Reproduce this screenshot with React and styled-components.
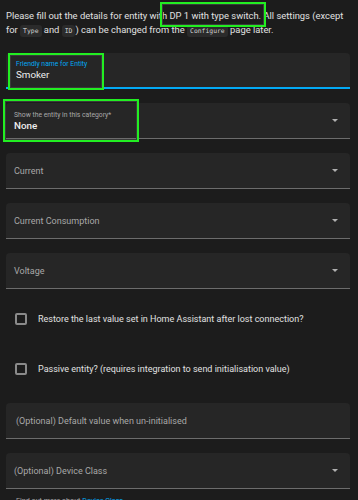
import React from "react";
import styled, { createGlobalStyle } from "styled-components";

const Global = createGlobalStyle`
  html, body {
    margin: 0;
    padding: 0;
    background-color: #1c1c1c;
  }

  body {
    font-family: Roboto, "Liberation Sans", sans-serif;
    color: #e1e1e1;
  }
`;

const Page = styled.div`
  width: 358px;
  height: 500px;
  overflow: hidden;
  box-sizing: border-box;
  padding: 9px 4px 0 6px;
`;

const Intro = styled.p`
  font-size: 9.4px;
  line-height: 14px;
  margin: 0;
  padding: 0;
  color: #e1e1e1;
`;

const Code = styled.code`
  font-family: "DejaVu Sans Mono", "Liberation Mono", monospace;
  font-size: 6.4px;
  background-color: #2b2b2b;
  color: #d0d0d0;
  padding: 2px 3px;
  border-radius: 3px;
`;

const Marked = styled.span`
  position: relative;

  &::before {
    content: "";
    position: absolute;
    left: -9px;
    right: -5px;
    top: -8px;
    bottom: -6px;
    border: 2px solid #22ee22;
    box-shadow: inset 0 0 0 1px #3a3a3a;
    pointer-events: none;
  }
`;

const Form = styled.div`
  display: flex;
  flex-direction: column;
  gap: 14px;
  margin-top: 15px;
  width: 344px;
`;

const Field = styled.div`
  position: relative;
  box-sizing: border-box;
  height: 36px;
  display: flex;
  align-items: center;
  padding: 0 12px 0 ${props => (props.$text ? "10px" : "8px")};
  background-color: #262626;
  border-radius: 4px 4px 0 0;
  border-bottom: ${props => (props.$focused ? "2px solid #03a9f4" : "1px solid #6c6c6c")};
`;

const FieldBody = styled.div`
  flex: 1;
  display: flex;
  flex-direction: column;
  justify-content: center;
`;

const FloatLabel = styled.span`
  font-size: 6.8px;
  line-height: 10px;
  color: ${props => (props.$focused ? "#03a9f4" : "#a8a8a8")};
`;

const Value = styled.span`
  font-size: 9.8px;
  line-height: 12px;
  font-weight: ${props => (props.$bold ? 500 : 400)};
  color: #eeeeee;
`;

const Placeholder = styled.span`
  font-size: 9px;
  line-height: 12px;
  color: #a8a8a8;
`;

const Arrow = styled.span`
  width: 0;
  height: 0;
  border-left: 3px solid transparent;
  border-right: 3px solid transparent;
  border-top: 3.5px solid #b0b0b0;
`;

const Highlight = styled.div`
  position: absolute;
  left: ${props => props.$left}px;
  top: ${props => props.$top}px;
  width: ${props => props.$width}px;
  height: ${props => props.$height}px;
  box-sizing: border-box;
  border: 2px solid #22ee22;
  box-shadow: inset 0 0 0 1px #3a3a3a;
  pointer-events: none;
`;

const CheckRow = styled.label`
  height: 36px;
  display: flex;
  align-items: center;
  gap: 11px;
  padding: 0 0 4px 9px;
  box-sizing: border-box;
  font-size: 9px;
  color: #e1e1e1;
`;

const Box = styled.span`
  flex: none;
  width: 12px;
  height: 12px;
  box-sizing: border-box;
  border: 2px solid #8a8a8a;
  border-radius: 2px;
`;

const Helper = styled.p`
  margin: 7px 0 0 10px;
  font-size: 7.2px;
  color: #a8a8a8;
`;

const Link = styled.span`
  color: #03a9f4;
`;

const Select = ({ label, value, highlight }) => (
  <Field>
    <FieldBody>
      {value ? (
        <>
          <FloatLabel>{label}</FloatLabel>
          <Value $bold>{value}</Value>
        </>
      ) : (
        <Placeholder>{label}</Placeholder>
      )}
    </FieldBody>
    <Arrow />
    {highlight}
  </Field>
);

const Check = ({ children }) => (
  <CheckRow>
    <Box />
    {children}
  </CheckRow>
);

export default function App() {
  return (
    <Page>
      <Global />
      <Intro>
        Please fill out the details for entity with <Marked>DP 1 with type switch.</Marked> All settings (except
        for <Code>Type</Code> and <Code>ID</Code>) can be changed from the <Code>Configure</Code> page later.
      </Intro>

      <Form>
        <Field $focused $text>
          <FieldBody>
            <FloatLabel $focused>Friendly name for Entity</FloatLabel>
            <Value>Smoker</Value>
          </FieldBody>
          <Highlight $left={2} $top={0} $width={96} $height={37} />
        </Field>

        <Select
          label="Show the entity in this category*"
          value="None"
          highlight={<Highlight $left={-3} $top={-4} $width={136} $height={43} />}
        />
        <Select label="Current" />
        <Select label="Current Consumption" />
        <Select label="Voltage" />

        <Check>Restore the last value set in Home Assistant after lost connection?</Check>
        <Check>Passive entity? (requires integration to send initialisation value)</Check>

        <Field $text>
          <FieldBody>
            <Placeholder>(Optional) Default value when un-initialised</Placeholder>
          </FieldBody>
        </Field>

        <div>
          <Select label="(Optional) Device Class" />
          <Helper>
            Find out more about <Link>Device Class</Link>
          </Helper>
        </div>
      </Form>
    </Page>
  );
}
